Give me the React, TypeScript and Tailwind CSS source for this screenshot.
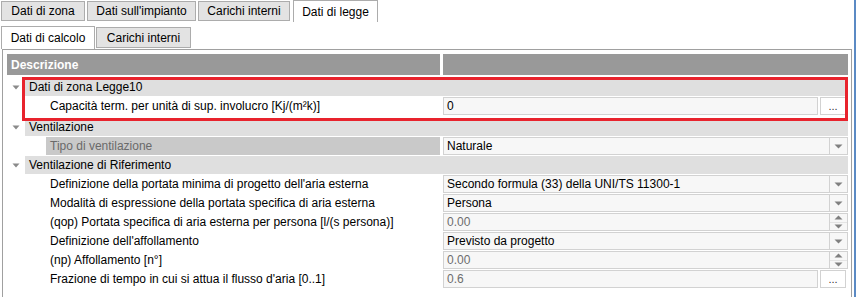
import React from 'react';

type Kind = 'text' | 'combo' | 'spin' | 'button';

interface RowProps {
  label: string;
  value: string;
  kind: Kind;
  muted?: boolean;
  disabled?: boolean;
}

function TreeArrow() {
  return (
    <svg width="8" height="5" viewBox="0 0 8 5">
      <path d="M0.5 0.5 L7.5 0.5 L4 4.5 Z" fill="#8a8a8a" />
    </svg>
  );
}

function Caret({ up = false }: { up?: boolean }) {
  return (
    <svg width="9" height="5" viewBox="0 0 9 5">
      {up ? <path d="M0.5 4.5 L8.5 4.5 L4.5 0.5 Z" fill="#808080" /> : <path d="M0.5 0.5 L8.5 0.5 L4.5 4.5 Z" fill="#808080" />}
    </svg>
  );
}

function Group({ title }: { title: string }) {
  return (
    <div className="flex h-[19px]">
      <div className="w-[18px] flex items-center justify-center pb-px">
        <TreeArrow />
      </div>
      <div className="flex-1 h-[18px] bg-[#dfdfdf] flex items-center pl-[4px] text-black">{title}</div>
    </div>
  );
}

function ValueCell({ value, kind, muted }: { value: string; kind: Kind; muted?: boolean }) {
  const txt = muted ? 'text-[#6d6d6d]' : 'text-black';
  if (kind === 'button') {
    return (
      <div className="flex w-[405px] h-[18px]">
        <div className={`w-[375px] h-full border border-[#d2d2d2] bg-[#f7f7f7] flex items-center pl-[3px] ${txt}`}>{value}</div>
        <div className="ml-[2px] w-[26px] h-full border border-[#d2d2d2] bg-white flex items-end justify-center pb-[2px] text-[11px] leading-[11px] text-[#333]">...</div>
      </div>
    );
  }
  return (
    <div className="flex w-[405px] h-[18px] border border-[#d2d2d2] bg-[#f7f7f7]">
      <div className={`flex-1 flex items-center pl-[3px] ${txt}`}>{value}</div>
      {kind === 'combo' && (
        <div className="w-[18px] border-l border-[#d2d2d2] flex items-center justify-center">
          <Caret />
        </div>
      )}
      {kind === 'spin' && (
        <div className="w-[18px] border-l border-[#d2d2d2] flex flex-col">
          <div className="flex-1 flex items-center justify-center border-b border-[#e4e4e4]">
            <Caret up />
          </div>
          <div className="flex-1 flex items-center justify-center">
            <Caret />
          </div>
        </div>
      )}
    </div>
  );
}

function Row({ label, value, kind, muted, disabled }: RowProps) {
  return (
    <div className="flex h-[19px] pl-[39px]">
      <div
        className={`w-[394px] h-[18px] flex items-center pl-[4px] ${disabled ? 'bg-[#c9c9c9] text-[#6a6a6a]' : 'bg-white text-black'}`}
      >
        {label}
      </div>
      <div className="ml-[3px]">
        <ValueCell value={value} kind={kind} muted={muted} />
      </div>
    </div>
  );
}

function Tab({ label, active = false, w }: { label: string; active?: boolean; w: string }) {
  return (
    <div
      className={`${w} flex items-center justify-center border-[#acacac] ${
        active ? 'h-[22px] bg-white border-t border-l border-r' : 'h-[20px] mt-[1px] bg-[#e3e3e3] border'
      }`}
    >
      {label}
    </div>
  );
}

export default function App() {
  return (
    <div className="w-[856px] h-[297px] bg-white overflow-hidden relative text-[12px] leading-[14px] text-black font-['Segoe_UI','Liberation_Sans',Arial,sans-serif]">
      {/* window edge */}
      <div className="absolute right-0 top-0 w-[2px] h-full bg-[#5b8ac4]" />

      <div className="flex items-start h-[22px] pl-[1px]">
        <Tab label="Dati di zona" w="w-[84px]" />
        <div className="ml-[2px]">
          <Tab label="Dati sull'impianto" w="w-[109px]" />
        </div>
        <div className="ml-[2px]">
          <Tab label="Carichi interni" w="w-[92px]" />
        </div>
        <div className="ml-[3px]">
          <Tab label="Dati di legge" active w="w-[85px]" />
        </div>
      </div>

      <div className="flex items-start h-[27px] pl-[1px] pt-[4px]">
        <div className="flex items-center justify-center w-[94px] h-[23px] bg-white border-t border-l border-r border-[#acacac]">
          Dati di calcolo
        </div>
        <div className="ml-[1px] mt-[1px] flex items-center justify-center w-[95px] h-[21px] bg-[#e3e3e3] border border-[#acacac]">
          Carichi interni
        </div>
      </div>

      <div className="ml-[2px] w-[850px] h-[260px] border border-[#a0a0a0] pt-[4px] pl-[4px] pr-[3px]">
        <div className="flex h-[21px]">
          <div className="w-[433px] bg-[#999999] text-white font-bold flex items-center pl-[4px]">Descrizione</div>
          <div className="ml-[3px] flex-1 bg-[#999999]" />
        </div>

        <div className="relative mt-[3px]">
          <div className="absolute left-[15px] top-[-1px] w-[826px] h-[44px] border-[3px] border-[#e8232d] pointer-events-none" />
          <Group title="Dati di zona Legge10" />
          <Row label="Capacità term. per unità di sup. involucro [Kj/(m²k)]" value="0" kind="button" />
        </div>

        <div className="mt-[2px]">
          <Group title="Ventilazione" />
          <Row label="Tipo di ventilazione" value="Naturale" kind="combo" disabled />
          <Group title="Ventilazione di Riferimento" />
          <Row label="Definizione della portata minima di progetto dell'aria esterna" value="Secondo formula (33) della UNI/TS 11300-1" kind="combo" />
          <Row label="Modalità di espressione della portata specifica di aria esterna" value="Persona" kind="combo" />
          <Row label="(qop) Portata specifica di aria esterna per persona [l/(s persona)]" value="0.00" kind="spin" muted />
          <Row label="Definizione dell'affollamento" value="Previsto da progetto" kind="combo" />
          <Row label="(np) Affollamento [n°]" value="0.00" kind="spin" muted />
          <Row label="Frazione di tempo in cui si attua il flusso d'aria [0..1]" value="0.6" kind="button" muted />
        </div>
      </div>
    </div>
  );
}
